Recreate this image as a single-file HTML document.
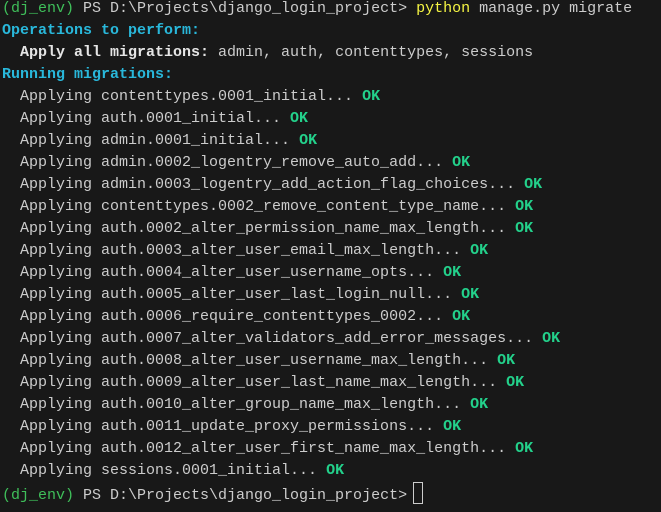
<!DOCTYPE html>
<html><head><meta charset="utf-8"><style>
html,body{margin:0;padding:0;background:#181818;width:661px;height:512px;overflow:hidden}
pre{margin:0;position:absolute;left:2px;top:-2px;font-family:"Liberation Mono","DejaVu Sans Mono",monospace;font-size:15px;line-height:22px;color:#cccccc;white-space:pre}
.g{color:#3fbf5a}.b{color:#29b8db;font-weight:bold}.w{font-weight:bold;color:#e5e5e5}.y{color:#f5f543}.ok{color:#23d18b;font-weight:bold}
.cur{display:inline-block;width:8px;height:20px;border:1px solid #cccccc;vertical-align:-5px;margin-left:-3px}
</style></head><body><pre><span class="g">(dj_env)</span> PS D:\Projects\django_login_project&gt; <span class="y">python</span> manage.py migrate
<span class="b">Operations to perform:</span>
  <span class="w">Apply all migrations:</span> admin, auth, contenttypes, sessions
<span class="b">Running migrations:</span>
  Applying contenttypes.0001_initial... <span class="ok">OK</span>
  Applying auth.0001_initial... <span class="ok">OK</span>
  Applying admin.0001_initial... <span class="ok">OK</span>
  Applying admin.0002_logentry_remove_auto_add... <span class="ok">OK</span>
  Applying admin.0003_logentry_add_action_flag_choices... <span class="ok">OK</span>
  Applying contenttypes.0002_remove_content_type_name... <span class="ok">OK</span>
  Applying auth.0002_alter_permission_name_max_length... <span class="ok">OK</span>
  Applying auth.0003_alter_user_email_max_length... <span class="ok">OK</span>
  Applying auth.0004_alter_user_username_opts... <span class="ok">OK</span>
  Applying auth.0005_alter_user_last_login_null... <span class="ok">OK</span>
  Applying auth.0006_require_contenttypes_0002... <span class="ok">OK</span>
  Applying auth.0007_alter_validators_add_error_messages... <span class="ok">OK</span>
  Applying auth.0008_alter_user_username_max_length... <span class="ok">OK</span>
  Applying auth.0009_alter_user_last_name_max_length... <span class="ok">OK</span>
  Applying auth.0010_alter_group_name_max_length... <span class="ok">OK</span>
  Applying auth.0011_update_proxy_permissions... <span class="ok">OK</span>
  Applying auth.0012_alter_user_first_name_max_length... <span class="ok">OK</span>
  Applying sessions.0001_initial... <span class="ok">OK</span>
<span class="g">(dj_env)</span> PS D:\Projects\django_login_project&gt; <span class="cur"></span></pre></body></html>
